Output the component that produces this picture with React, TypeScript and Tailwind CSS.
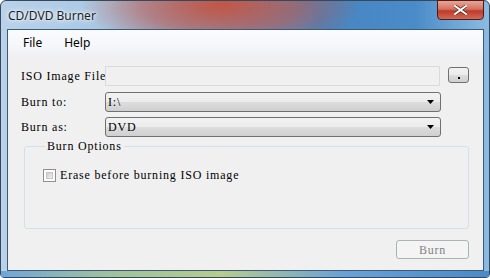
import React from "react";

const mono = "font-['Liberation_Serif','DejaVu_Serif',serif] text-[12px] tracking-[0.8px] whitespace-nowrap text-black";

const ComboBox = ({ value }: { value: string }) => (
  <div className="w-[336px] h-[20px] shrink-0 rounded-[3px] border border-[#707070] bg-[linear-gradient(180deg,#f2f2f2_0%,#ebebeb_50%,#dddddd_51%,#cfcfcf_100%)] flex items-center justify-between pl-[2px] pr-[6px]">
    <span className={mono}>{value}</span>
    <svg width="7" height="4" viewBox="0 0 7 4">
      <path d="M0 0h7L3.5 4z" fill="#000" />
    </svg>
  </div>
);

export default function App() {
  return (
    <div className="w-[490px] h-[278px] bg-white">
      <div className="w-[490px] h-[278px] flex flex-col rounded-t-[6px] rounded-b-[4px] border border-[#39475a] bg-[radial-gradient(ellipse_140px_50px_at_220px_4px,rgba(198,82,62,0.95),rgba(198,82,62,0.55)_55%,rgba(198,82,62,0)_100%),linear-gradient(90deg,#b9d2ea_0%,#a8c7e4_22%,#7aaad6_42%,#4585c2_65%,#4a8cc8_85%,#8cbbe2_100%)]">
        {/* title bar */}
        <div className="h-[28px] shrink-0 flex items-start justify-between pl-[7px] pr-[5px]">
          <span className="mt-[7px] font-['Noto_Sans','Open_Sans',sans-serif] text-[12px] leading-[16px] text-[#1e1e1e] [text-shadow:0_0_6px_#fff,0_0_3px_#fff]">
            CD/DVD Burner
          </span>
          <div className="-mt-[1px] w-[47px] h-[20px] rounded-b-[4px] border border-[#4d1c18] bg-[linear-gradient(180deg,#e8a597_0%,#d47361_45%,#c0392b_55%,#d06a55_100%)] flex items-center justify-center">
            <svg width="13" height="10" viewBox="0 0 13 10">
              <path d="M1 1l11 8M12 1L1 9" stroke="#4a2320" strokeWidth="3.4" strokeLinecap="square" />
              <path d="M1 1l11 8M12 1L1 9" stroke="#fff" strokeWidth="2" strokeLinecap="square" />
            </svg>
          </div>
        </div>

        {/* client area */}
        <div className="ml-[6px] w-[477px] h-[242px] shrink-0 border border-[#3e5a78] flex flex-col bg-[#f0f0f0]">
          {/* menu bar */}
          <div className="h-[26px] shrink-0 flex items-center pl-[8px] bg-[linear-gradient(180deg,#fafbfd_0%,#f5f7fa_60%,#eef0f4_100%)] font-['Noto_Sans','Open_Sans',sans-serif] text-[12px] leading-[16px] text-black">
            <span className="px-[7px]">File</span>
            <span className="px-[7px] ml-[8px]">Help</span>
          </div>

          {/* form */}
          <div className="flex flex-col pt-[10px] pl-[13px]">
            <div className="flex items-start h-[20px]">
              <span className={`${mono} w-[84px] shrink-0 leading-[20px]`}>ISO Image File</span>
              <div className="w-[335px] h-[20px] shrink-0 border border-[#dadada] bg-[#f0f0f0]" />
              <div className="ml-[8px] mt-[1px] w-[21px] h-[16px] shrink-0 rounded-[3px] border border-[#707070] bg-[linear-gradient(180deg,#f2f2f2_0%,#ebebeb_50%,#dddddd_51%,#cfcfcf_100%)] flex items-end justify-center">
                <span className="w-[2px] h-[2px] mb-[3px] bg-black" />
              </div>
            </div>

            <div className="flex items-center h-[20px] mt-[6px]">
              <span className={`${mono} w-[84px] shrink-0`}>Burn to:</span>
              <ComboBox value="I:\" />
            </div>

            <div className="flex items-center h-[20px] mt-[5px]">
              <span className={`${mono} w-[84px] shrink-0`}>Burn as:</span>
              <ComboBox value="DVD" />
            </div>

            <fieldset className="mt-[3px] ml-[3px] w-[445px] h-[89px] rounded-[3px] border border-[#d5dfe5] px-[18px]">
              <legend className={`${mono} ml-[2px] px-[2px] leading-[12px]`}>Burn Options</legend>
              <label className="flex items-center mt-[14px]">
                <span className="w-[13px] h-[13px] shrink-0 border border-[#8f8f8f] bg-white p-[2px]">
                  <span className="block w-full h-full border border-[#c6c6c6] bg-[linear-gradient(135deg,#cbcbcb_0%,#f3f3f3_100%)]" />
                </span>
                <span className={`${mono} ml-[4px]`}>Erase before burning ISO image</span>
              </label>
            </fieldset>

            <div className="flex justify-end mt-[11px] pr-[14px]">
              <div className="w-[73px] h-[19px] rounded-[3px] border border-[#adb2b5] bg-[#f4f4f4] flex items-center justify-center">
                <span className={`${mono} !text-[#838383]`}>Burn</span>
              </div>
            </div>
          </div>
        </div>

        {/* bottom frame */}
        <div className="flex-1 bg-[linear-gradient(90deg,#6fa6d8_0%,#9cc0a0_20%,#b7cc8c_45%,#6aa2d6_70%,#4a8bc6_100%)]" />
      </div>
    </div>
  );
}
